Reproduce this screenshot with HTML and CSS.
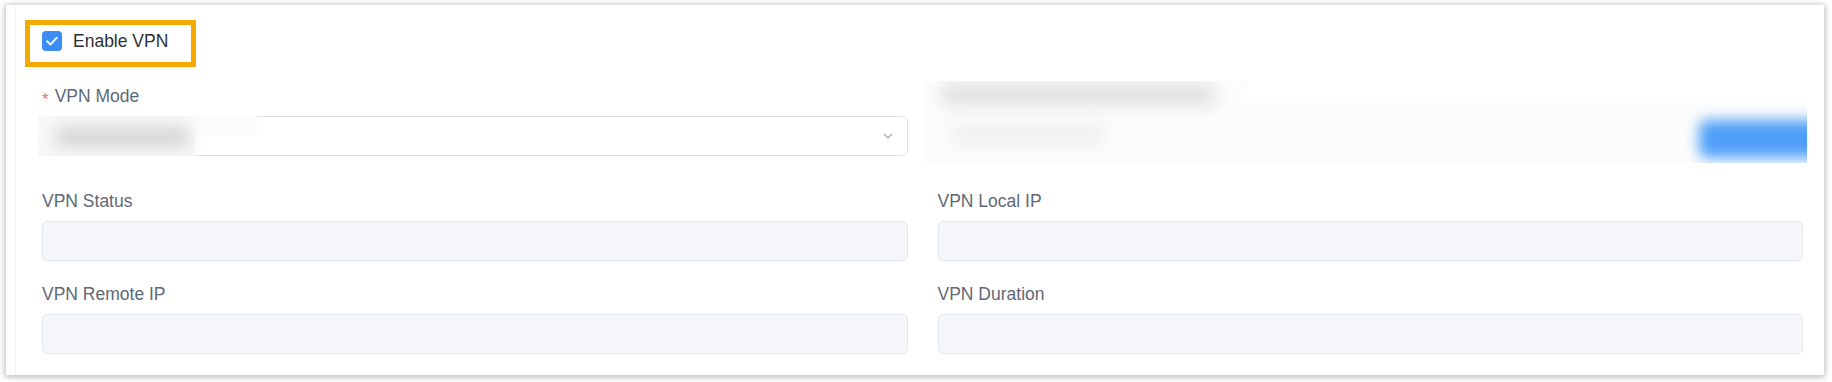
FILE: index.html
```html
<!DOCTYPE html>
<html lang="en">
<head>
  <meta charset="UTF-8">
  <meta name="viewport" content="width=device-width, initial-scale=1.0">
  <title>VPN</title>
  <link rel="stylesheet" href="styles.css">
</head>
<body>

  <div class="frame">
    <div class="page">

      <!-- Enable checkbox (highlighted) -->
      <div class="highlight">
        <label class="checkbox">
          <span class="checkbox-box">
            <svg width="20" height="20" viewBox="0 0 20 20">
              <polyline points="5.2,10.2 8.6,13.4 14.6,6.8" fill="none" stroke="#fff" stroke-width="2" stroke-linecap="round" stroke-linejoin="round"/>
            </svg>
          </span>
          <span class="checkbox-label">Enable VPN</span>
        </label>
      </div>

      <!-- VPN form -->
      <div class="form">
        <div class="form-item first">
          <div class="form-label"><span class="required">*</span>VPN Mode</div>
          <div class="select">
            <div class="select-blur"><div class="blur-blob"></div></div>
            <svg class="chevron" width="10" height="6" viewBox="0 0 10 6">
              <polyline points="1,1 5,5 9,1" fill="none" stroke="#a8abb2" stroke-width="1.3"/>
            </svg>
          </div>
        </div>

        <div class="form-item">
          <div class="redacted">
            <div class="blur-line line-1"></div>
            <div class="redacted-row">
              <div class="blur-line line-2"></div>
              <div class="blur-button"></div>
            </div>
          </div>
        </div>

        <div class="form-item">
          <div class="form-label">VPN Status</div>
          <div class="input"></div>
        </div>

        <div class="form-item">
          <div class="form-label">VPN Local IP</div>
          <div class="input"></div>
        </div>

        <div class="form-item">
          <div class="form-label">VPN Remote IP</div>
          <div class="input"></div>
        </div>

        <div class="form-item">
          <div class="form-label">VPN Duration</div>
          <div class="input"></div>
        </div>
      </div>

    </div>
  </div>

</body>
</html>
```

FILE: styles.css
```css
html, body {
  margin: 0;
  padding: 0;
  background-color: #fff;
  font-family: "Liberation Sans", Arial, sans-serif;
  overflow: hidden;
}

.frame {
  margin: 5px 8px 7px 6px;
  height: 370px;
  background-color: #fff;
  box-shadow: 0 1px 6px 1px rgba(0, 0, 0, 0.28);
}

.page {
  margin-left: 9px;
  height: 100%;
  border-left: 1px solid #f1f1f1;
  padding: 15px 21px 0 9px;
  box-sizing: border-box;
}

/* orange highlight around checkbox */
.highlight {
  display: flex;
  width: fit-content;
  border: 5px solid #f5a800;
  padding: 6px 23px 11px 12px;
}

.checkbox {
  display: flex;
  align-items: center;
  height: 20px;
}

.checkbox-box {
  width: 20px;
  height: 20px;
  border-radius: 4px;
  background-color: #3d8bf5;
  display: flex;
}

.checkbox-label {
  margin-left: 11px;
  font-size: 17.5px;
  line-height: 20px;
  color: #2c3038;
}

/* form grid */
.form {
  display: grid;
  grid-template-columns: 1fr 1fr;
  column-gap: 30px;
  row-gap: 21px;
  margin: 17px 0 0 17px;
}

.form-item.first {
  margin-bottom: 12px;
}

.form-label {
  font-size: 17.5px;
  line-height: 24px;
  height: 24px;
  color: #5f6874;
  margin-bottom: 8px;
}

.required {
  color: #f56c6c;
  margin-right: 6px;
  vertical-align: -0.2em;
  line-height: 0;
  font-size: 17px;
}

.select {
  position: relative;
  height: 40px;
  box-sizing: border-box;
  border: 1px solid #dcdfe6;
  border-radius: 5px;
  display: flex;
  align-items: center;
  justify-content: flex-end;
  padding-right: 14px;
}

/* blurred selected value */
.select-blur {
  position: absolute;
  left: -5px;
  top: -1px;
  width: 219px;
  height: 40px;
  overflow: hidden;
  background:
    linear-gradient(#f8f8f8, #f8f8f8) 0 0 / 157px 100% no-repeat,
    linear-gradient(#fbfbfb, #fbfbfb) 0 0 / 100% 19px no-repeat;
}

.blur-blob {
  margin: 11px 0 0 16px;
  width: 136px;
  height: 20px;
  border-radius: 10px;
  background-color: #d4d5d8;
  filter: blur(8px);
}

.input {
  height: 40px;
  box-sizing: border-box;
  border: 1px solid #e4e7ed;
  border-radius: 5px;
  background-color: #f5f7fa;
}

/* blurred hint area */
.redacted {
  margin: -3px -4px 4px -15px;
  height: 82px;
  background:
    linear-gradient(#fff, #fff) 100% 0 / 560px 22px no-repeat,
    #fcfcfc;
  overflow: hidden;
  padding: 3px 0 0 18px;
  box-sizing: border-box;
}

.blur-line {
  filter: blur(8px);
}

.line-1 {
  width: 275px;
  height: 22px;
  border-radius: 8px;
  background-color: #e0e1e4;
}

.redacted-row {
  display: flex;
  justify-content: space-between;
  align-items: flex-start;
  margin-top: 12px;
}

.line-2 {
  width: 155px;
  height: 22px;
  margin: 6px 0 0 10px;
  border-radius: 8px;
  background-color: #eff0f2;
}

.blur-button {
  width: 124px;
  height: 38px;
  margin-top: 2px;
  margin-right: -16px;
  border-radius: 8px;
  background-color: #4f9ff8;
  filter: blur(7px);
}
```
